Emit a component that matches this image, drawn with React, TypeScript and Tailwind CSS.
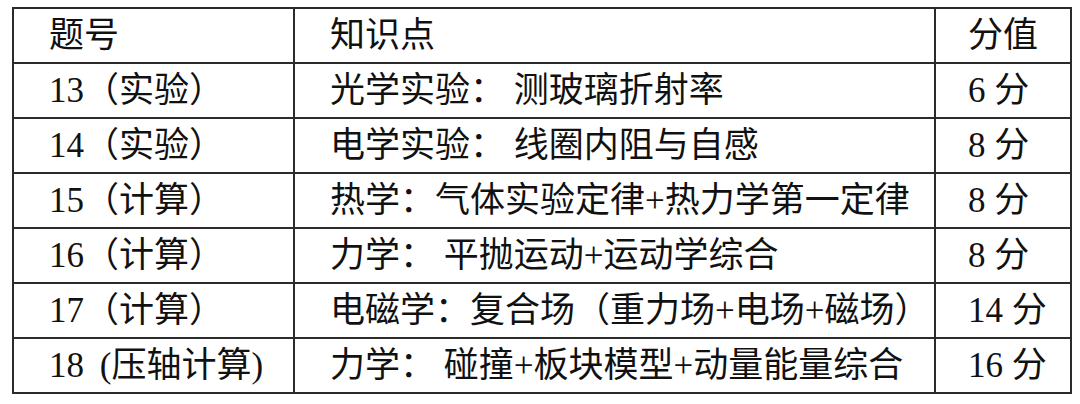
const rows: [string, string, string][] = [
  ["13（实验）", "光学实验： 测玻璃折射率", "6 分"],
  ["14（实验）", "电学实验： 线圈内阻与自感", "8 分"],
  ["15（计算）", "热学：气体实验定律+热力学第一定律", "8 分"],
  ["16（计算）", "力学： 平抛运动+运动学综合", "8 分"],
  ["17（计算）", "电磁学：复合场（重力场+电场+磁场）", "14 分"],
  ["18 \u2009(压轴计算)", "力学： 碰撞+板块模型+动量能量综合", "16 分"],
]

function Cell({ children, last }: { children: React.ReactNode; last?: boolean }) {
  return (
    <td
      className={
        last
          ? "h-[55px] border-2 border-[#2b2b2b] pl-[32px] align-middle whitespace-pre"
          : "h-[55px] border-2 border-[#2b2b2b] pl-[35px] align-middle whitespace-pre"
      }
    >
      {children}
    </td>
  )
}

export default function App() {
  return (
    <div className="h-[404px] w-[1080px] bg-white pt-[7px] pl-[12px]">
      <table className="table-fixed border-collapse border-2 border-[#2b2b2b] font-['Liberation_Serif','Noto_Sans_CJK_SC',serif] text-[35px] leading-none text-[#111]">
        <colgroup>
          <col className="w-[281px]" />
          <col className="w-[641px]" />
          <col className="w-[136px]" />
        </colgroup>
        <tbody>
          <tr>
            <Cell>题号</Cell>
            <Cell>知识点</Cell>
            <Cell last>分值</Cell>
          </tr>
          {rows.map((r, i) => (
            <tr key={i}>
              <Cell>{r[0]}</Cell>
              <Cell>{r[1]}</Cell>
              <Cell last>{r[2]}</Cell>
            </tr>
          ))}
        </tbody>
      </table>
    </div>
  )
}
